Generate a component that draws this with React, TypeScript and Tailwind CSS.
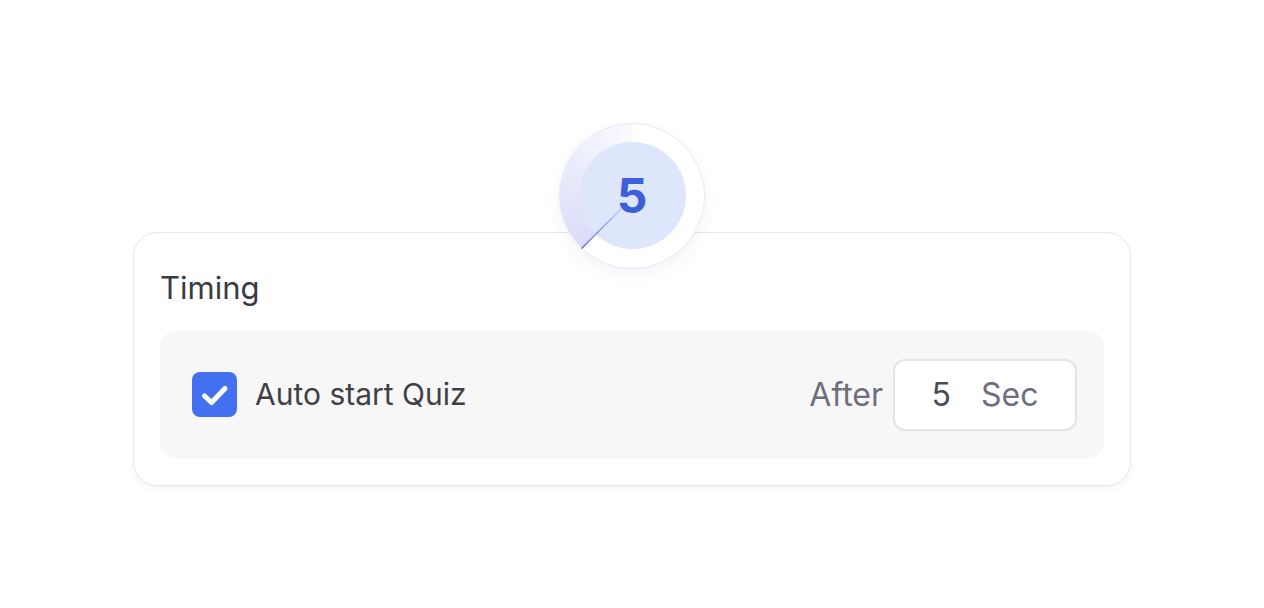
import React from 'react';

function CountdownBadge({ value }: { value: number }) {
  return (
    <div className="relative z-10 flex h-[146px] w-[146px] items-center justify-center rounded-full border border-[#e6e9f7] bg-white shadow-[0_6px_16px_rgba(60,70,140,0.06)]">
      {/* progress sweep */}
      <div className="absolute inset-0 rounded-full bg-[conic-gradient(from_225deg,rgba(110,120,230,0.26),rgba(140,150,235,0.05)_135deg,rgba(255,255,255,0)_135deg)]" />
      <div className="relative flex h-[107px] w-[107px] items-center justify-center rounded-full bg-[#dde6fb]">
        <span className="font-['Inter',sans-serif] text-[48px] font-bold leading-none text-[#3d5fd9]">{value}</span>
      </div>
      <svg className="absolute inset-0" width="146" height="146" viewBox="0 0 146 146">
        <defs>
          <linearGradient id="hand" x1="60" y1="86" x2="21" y2="125" gradientUnits="userSpaceOnUse">
            <stop offset="0" stopColor="#6b7fe0" stopOpacity="0.3" />
            <stop offset="1" stopColor="#3d55d6" />
          </linearGradient>
        </defs>
        <line x1="61" y1="85" x2="21.5" y2="124.5" stroke="url(#hand)" strokeWidth="1.2" />
      </svg>
    </div>
  );
}

export default function App() {
  return (
    <div className="flex min-h-screen flex-col items-center justify-center bg-white font-['Inter',sans-serif]">
      <CountdownBadge value={5} />

      <div className="-mt-[37px] w-[998px] rounded-[24px] border border-[#e7e7ea] bg-white px-[26px] pb-[26px] pt-[37px] shadow-[0_4px_10px_rgba(0,0,0,0.04)]">
        {/* Section title */}
        <h2 className="text-[31px] leading-9 text-[#3a3a42]">Timing</h2>

        {/* Auto start row */}
        <div className="mt-[25px] flex h-[128px] items-center justify-between rounded-[16px] bg-[#f7f7f8] pl-8 pr-[27px]">
          <label className="flex items-center gap-[18px]">
            <span className="h-[45px] w-[45px] rounded-[8px] bg-[#4270f0]">
              <svg width="45" height="45" viewBox="0 0 45 45" fill="none">
                <path d="M12.5 24L19.5 30.5L33 16.5" stroke="white" strokeWidth="5" strokeLinecap="round" strokeLinejoin="round" />
              </svg>
            </span>
            <span className="text-[30px] text-[#3f3f46]">Auto start Quiz</span>
          </label>

          <div className="flex items-center gap-[10px]">
            <span className="text-[32px] text-[#6e6e7e]">After</span>
            <div className="flex h-[72px] w-[184px] items-center justify-center gap-[30px] rounded-[12px] border-2 border-[#e4e4e8] bg-white">
              <span className="text-[32px] text-[#4a4a55]">5</span>
              <span className="text-[32px] text-[#6e6e7e]">Sec</span>
            </div>
          </div>
        </div>
      </div>
    </div>
  );
}
